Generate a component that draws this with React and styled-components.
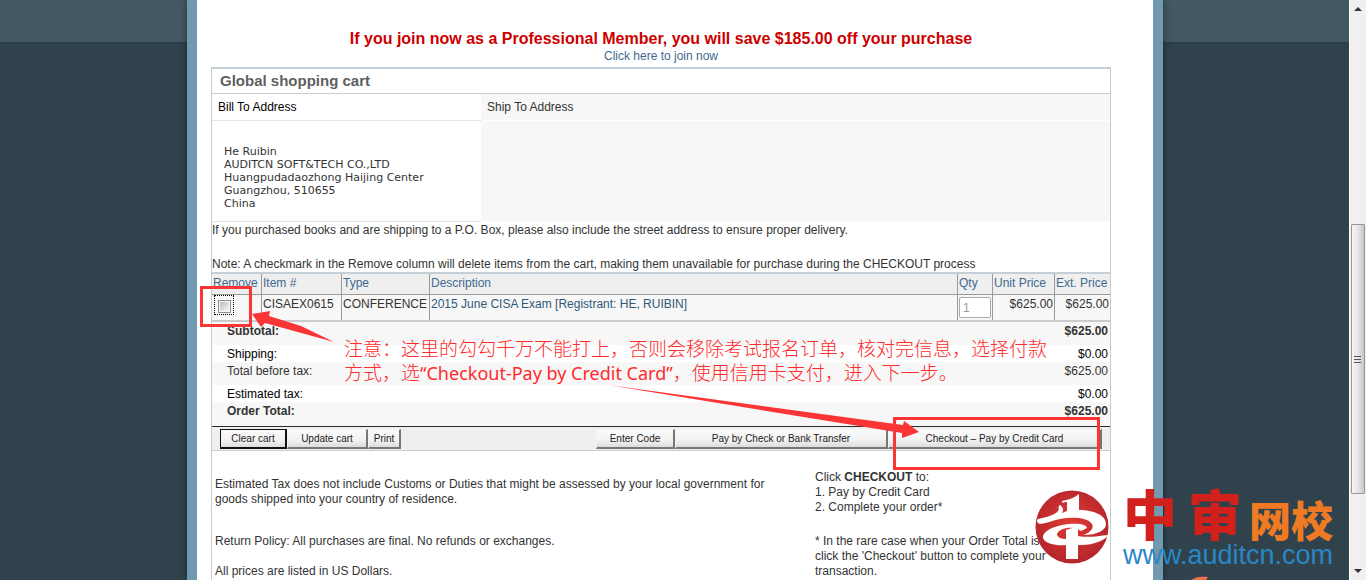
import React from "react";
import styled, { createGlobalStyle, css } from "styled-components";

const GlobalStyle = createGlobalStyle`
  * { box-sizing: border-box; }
  body {
    margin: 0;
    font: 12px/15px "Liberation Sans", Arial, sans-serif;
    color: #333;
  }
  h1, h2, p, dl, dd, dt { margin: 0; }
`;

const Page = styled.div`
  position: relative;
  display: flex;
  height: 100vh;
  overflow: hidden;
`;

const Backdrop = styled.div`
  flex: 1;
  background: linear-gradient(#435863 0 42px, #2b3e48 42px, #30434d 47px);
`;

const Sheet = styled.main`
  max-width: 976px;
  min-height: 100%;
  margin: 0 auto;
  padding: 29px 42px 0 14px;
  display: flex;
  flex-direction: column;
  background: #fff;
  border: solid #7199b0;
  border-width: 0 10px;
  box-shadow: 0 0 7px rgba(0, 0, 0, 0.45);
`;

const Promo = styled.header`
  padding-bottom: 3px;
  text-align: center;
  line-height: 15px;
`;

const PromoTitle = styled.h1`
  font-size: 16px;
  line-height: 20px;
  color: #cc0000;
`;

const Link = styled.a`
  color: ${(p) => (p.$dark ? "#2f5878" : "#41698f")};
  text-decoration: none;
`;

const Cart = styled.section`
  position: relative;
  flex: 1;
  border: 1px solid #c6ccd1;
  border-top: 2px solid #c5d0d6;
  border-bottom: 0;
`;

const CartTitle = styled.h2`
  padding: 0 8px;
  font-size: 15px;
  line-height: 24px;
  color: #5f5f5f;
  border-bottom: 1px solid #c5d0d6;
`;

const Addresses = styled.div`
  display: grid;
  grid-template-columns: 269px 1fr;
`;

const AddressHead = styled.h2`
  padding: 0 6px;
  font-size: 12px;
  font-weight: 400;
  line-height: 26px;
  color: ${(p) => (p.$ship ? "#333" : "#000")};
  background: ${(p) => (p.$ship ? "#f7f7f7" : "#fff")};
  border-bottom: 1px solid ${(p) => (p.$ship ? "#fff" : "#e4e4e4")};
`;

const Address = styled.address`
  padding: 24px 12px 11px;
  font: 11px/13px "DejaVu Sans", Verdana, sans-serif;
  background: ${(p) => (p.$ship ? "#f7f7f7" : "#fff")};
  border-bottom: 1px solid ${(p) => (p.$ship ? "#fff" : "#e4e4e4")};
`;

const Notes = styled.div`
  display: grid;
  gap: 19px;
  padding-top: 1px;
`;

const Items = styled.table`
  width: 100%;
  table-layout: fixed;
  border-collapse: separate;
  border-spacing: 0;
  border-top: 2px solid #c5d0d6;
  border-bottom: 2px solid #cbcbcb;
`;

const Col = styled.col`
  width: ${(p) => (p.$w ? `${p.$w}px` : "auto")};
`;

const cell = css`
  padding: 0 1px;
  line-height: 19px;
  font-weight: 400;
  text-align: ${(p) => (p.$right ? "right" : "left")};
  vertical-align: top;
  white-space: nowrap;
  border-right: 1px solid #9a9a9a;
  &:last-child { border-right: 0; }
`;

const Th = styled.th`
  ${cell}
  height: 21px;
  background: #efefef;
  border-bottom: 1px solid #9a9a9a;
`;

const Td = styled.td`
  ${cell}
  height: 25px;
  background: #f7f7f7;
`;

const CheckWrap = styled.label`
  display: flex;
  width: 20px;
  height: 20px;
  margin: 0 1px;
  padding: 4px 3px;
  border: 1px dotted #000;
`;

const Check = styled.input`
  appearance: none;
  flex: none;
  width: 13px;
  height: 13px;
  margin: 0;
  border: 1px solid #8e8f8f;
  background: linear-gradient(135deg, #b9bec3, #f6f6f6) content-box;
  padding: 1px;
`;

const Qty = styled.input`
  display: block;
  width: 32px;
  height: 21px;
  margin-top: 2px;
  padding: 1px 3px 0;
  font: 12px "Liberation Sans", Arial, sans-serif;
  color: #999;
  background: #fff;
  border: 1px solid #aaa;
  border-radius: 2px;
`;

const Totals = styled.dl`
  border-bottom: 1px solid #2b2b2b;
`;

const TotalRow = styled.div`
  display: flex;
  justify-content: space-between;
  height: ${(p) => (p.$shade ? 23 : 17)}px;
  padding: 1px 2px 0 15px;
  line-height: 17px;
  font-weight: ${(p) => (p.$bold ? 700 : 400)};
  color: ${(p) => (p.$shade ? "#333" : "#000")};
  background: ${(p) => (p.$shade ? "#f7f7f7" : "#fff")};
  &:last-child { height: 24px; }
`;

const Actions = styled.div`
  display: flex;
  justify-content: space-between;
  padding: 2px 8px 1px;
  background: #efefef;
  border-bottom: 1px solid #c5d0d6;
`;

const Group = styled.div`
  display: flex;
`;

const Button = styled.button`
  width: ${(p) => p.$w}px;
  height: 20px;
  padding: 0;
  font: 10px/16px "Liberation Sans", Arial, sans-serif;
  color: #222;
  white-space: nowrap;
  background: linear-gradient(#fafafa, #f2f2f2 60%, #dcdcdc);
  border: solid;
  border-width: 1px 2px 2px 1px;
  border-color: ${(p) => (p.$focus ? "#111" : "#f4f4f4 #777 #777 #f4f4f4")};
`;

const Terms = styled.div`
  display: grid;
  grid-template-columns: 600px 1fr;
  padding-left: 3px;
`;

const TermsColumn = styled.div`
  padding-top: ${(p) => (p.$right ? 19 : 26)}px;
  white-space: nowrap;
  p + p { margin-top: ${(p) => (p.$right ? 19 : 27)}px; }
  p + p + p { margin-top: 15px; }
`;

const red = "#fb3535";

const Marker = styled.div`
  position: absolute;
  left: ${(p) => p.$x}px;
  top: ${(p) => p.$y}px;
  width: ${(p) => p.$w}px;
  height: ${(p) => p.$h}px;
  border: 3px solid ${red};
  pointer-events: none;
`;

const Arrows = styled.svg`
  position: absolute;
  left: -1px;
  top: -2px;
  width: 900px;
  height: 400px;
  fill: ${red};
  pointer-events: none;
`;

const Remark = styled.p`
  position: absolute;
  left: 132px;
  top: 267px;
  font: 300 19px/24px "Noto Sans CJK SC", sans-serif;
  color: #ff2a2a;
  white-space: nowrap;
  pointer-events: none;
`;

const Latin = styled.span`
  font-family: "Noto Sans", sans-serif;
  font-size: 18px;
  font-weight: 400;
`;

const Watermark = styled.div`
  position: absolute;
  right: 33px;
  bottom: 11px;
  display: flex;
  align-items: flex-start;
  gap: 14px;
`;

const Emblem = styled.svg`
  width: 74px;
  height: 78px;
`;

const BrandName = styled.div`
  display: flex;
  align-items: flex-start;
  justify-content: space-between;
  height: 51px;
  font-family: "Noto Sans CJK SC", sans-serif;
  font-weight: 900;
`;

const Big = styled.span`
  display: flex;
  gap: 11px;
  font-size: 54px;
  line-height: 46px;
  color: #d2201c;
`;

const Small = styled.span`
  padding-top: 8px;
  font-size: 42px;
  line-height: 42px;
  color: #ee7b23;
`;

const BrandUrl = styled.div`
  font-size: 27px;
  line-height: 28px;
  color: #2b86c5;
`;

const Peek = styled.svg`
  position: absolute;
  right: 157px;
  bottom: 0;
  width: 18px;
  height: 4px;
`;

const ScrollBar = styled.div`
  position: relative;
  width: 16px;
  padding: 7px 0;
  display: flex;
  flex-direction: column;
  align-items: center;
  background: #f0f0f0;
  box-shadow: -1px 0 0 #fff;
`;

const ArrowIcon = styled.svg`
  width: 8px;
  height: 4px;
  fill: #333;
`;

const Track = styled.div`
  flex: 1;
  width: 14px;
  display: grid;
  grid-template-rows: 213fr 270fr 75fr;
`;

const Thumb = styled.div`
  grid-row: 2;
  display: grid;
  place-items: center;
  border: 1px solid #979797;
  border-radius: 1px;
  background: linear-gradient(90deg, #f6f6f6, #e6e6e8 50%, #c6c6c9);
`;

const columns = [50, 80, 88, 0, 35, 62, 55];
const heads = ["Remove", "Item #", "Type", "Description", "Qty", "Unit Price", "Ext. Price"];
const totals = [
  { label: "Subtotal:", value: "$625.00", shade: true, bold: true },
  { label: "Shipping:", value: "$0.00" },
  { label: "Total before tax:", value: "$625.00", shade: true },
  { label: "Estimated tax:", value: "$0.00" },
  { label: "Order Total:", value: "$625.00", shade: true, bold: true },
];

export default function App() {
  return (
    <Page>
      <GlobalStyle />
      <Backdrop>
        <Sheet>
          <Promo>
            <PromoTitle>If you join now as a Professional Member, you will save $185.00 off your purchase</PromoTitle>
            <Link href="#join">Click here to join now</Link>
          </Promo>
          <Cart>
            <CartTitle>Global shopping cart</CartTitle>
            <Addresses>
              <AddressHead>Bill To Address</AddressHead>
              <AddressHead $ship>Ship To Address</AddressHead>
              <Address>
                He Ruibin<br />
                AUDITCN SOFT&amp;TECH CO.,LTD<br />
                Huangpudadaozhong Haijing Center<br />
                Guangzhou, 510655<br />
                China
              </Address>
              <Address $ship />
            </Addresses>
            <Notes>
              <p>If you purchased books and are shipping to a P.O. Box, please also include the street address to ensure proper delivery.</p>
              <p>Note: A checkmark in the Remove column will delete items from the cart, making them unavailable for purchase during the CHECKOUT process</p>
            </Notes>
            <Items>
              <colgroup>
                {columns.map((w, i) => <Col key={i} $w={w} />)}
              </colgroup>
              <thead>
                <tr>
                  {heads.map((h) => <Th key={h} scope="col"><Link href="#sort">{h}</Link></Th>)}
                </tr>
              </thead>
              <tbody>
                <tr>
                  <Td>
                    <CheckWrap><Check type="checkbox" aria-label="Remove CISAEX0615" /></CheckWrap>
                  </Td>
                  <Td>CISAEX0615</Td>
                  <Td>CONFERENCE</Td>
                  <Td><Link $dark href="#item">2015 June CISA Exam [Registrant: HE, RUIBIN]</Link></Td>
                  <Td><Qty aria-label="Quantity" defaultValue="1" /></Td>
                  <Td $right>$625.00</Td>
                  <Td $right>$625.00</Td>
                </tr>
              </tbody>
            </Items>
            <Totals>
              {totals.map((t) => (
                <TotalRow key={t.label} $shade={t.shade} $bold={t.bold}>
                  <dt>{t.label}</dt>
                  <dd>{t.value}</dd>
                </TotalRow>
              ))}
            </Totals>
            <Actions>
              <Group>
                <Button $w={67} $focus>Clear cart</Button>
                <Button $w={81}>Update cart</Button>
                <Button $w={33}>Print</Button>
              </Group>
              <Group>
                <Button $w={79}>Enter Code</Button>
                <Button $w={213}>Pay by Check or Bank Transfer</Button>
                <Button $w={214}>Checkout – Pay by Credit Card</Button>
              </Group>
            </Actions>
            <Terms>
              <TermsColumn>
                <p>
                  Estimated Tax does not include Customs or Duties that might be assessed by your local government for<br />
                  goods shipped into your country of residence.
                </p>
                <p>Return Policy: All purchases are final. No refunds or exchanges.</p>
                <p>All prices are listed in US Dollars.</p>
              </TermsColumn>
              <TermsColumn $right>
                <p>
                  Click <b>CHECKOUT</b> to:<br />
                  1. Pay by Credit Card<br />
                  2. Complete your order*
                </p>
                <p>
                  * In the rare case when your Order Total is<br />
                  click the 'Checkout' button to complete your<br />
                  transaction.
                </p>
              </TermsColumn>
            </Terms>
            <Marker $x={-12} $y={217} $w={52} $h={41} />
            <Marker $x={681} $y={348} $w={207} $h={53} />
            <Arrows viewBox="0 0 900 400" aria-hidden="true">
              <path d="M41 247 L59 244 L58 249 L90 259 L123 275 L54 256 L50 260 Z" />
              <path d="M397 318 L692 358 L693 354 L708 365 L691 371 L691 366 Z" />
            </Arrows>
            <Remark>
              注意：这里的勾勾千万不能打上，否则会移除考试报名订单，核对完信息，选择付款<br />
              方式，选<Latin>“Checkout-Pay by Credit Card”</Latin>，使用信用卡支付，进入下一步。
            </Remark>
          </Cart>
        </Sheet>
      </Backdrop>
      <ScrollBar aria-hidden="true">
        <ArrowIcon viewBox="0 0 8 4"><path d="M4 0 L8 4 H0 Z" /></ArrowIcon>
        <Track>
          <Thumb>
            <svg width="8" height="9" viewBox="0 0 8 9">
              <path d="M0 1.5h7M0 4.5h7M0 7.5h7" stroke="#555" />
            </svg>
          </Thumb>
        </Track>
        <ArrowIcon viewBox="0 0 8 4"><path d="M0 0 H8 L4 4 Z" /></ArrowIcon>
      </ScrollBar>
      <Watermark>
        <Emblem viewBox="0 0 74 78" aria-hidden="true">
          <defs>
            <radialGradient id="disc" cx="50%" cy="45%" r="55%">
              <stop offset="0" stopColor="#e33a36" />
              <stop offset="1" stopColor="#b3262b" />
            </radialGradient>
          </defs>
          <circle cx="37" cy="37" r="36.5" fill="url(#disc)" />
          <g fill="#fff">
            <path d="M44 4 V20 C58 20 71 25 71 34 C71 40 63 45 48 45 C56 42 59 38 57 34 C53 28 42 27 32 28 C20 29 14 33 5 34 C2 33 1 30 3 29 C12 27 20 25 23 21 C25 19 22 17 25 15 C28 17 29 20 27 23 L32 21 V12 C29 12 27 14 27 11 C33 10 39 8 44 4 Z" />
            <path d="M52 38 C51 33 38 33 27 35 C14 38 7 43 8 48 C10 54 22 56 32 55 L32 49 C26 49 22 47 22 44 C24 38 38 35 46 41 Z" />
            <path d="M31 40 L43 36 V46 C53 48 63 46 73 45 C71 49 66 51 60 53 C54 55 48 55 43 55 V69 H31 Z" />
          </g>
        </Emblem>
        <div>
          <BrandName>
            <Big><span>中</span><span>审</span></Big>
            <Small>网校</Small>
          </BrandName>
          <BrandUrl>www.auditcn.com</BrandUrl>
        </div>
      </Watermark>
      <Peek viewBox="0 0 18 4" aria-hidden="true">
        <path d="M0 4 C4 1 10 0 17 1 L15 4 Z" fill="#ee7050" />
      </Peek>
    </Page>
  );
}
